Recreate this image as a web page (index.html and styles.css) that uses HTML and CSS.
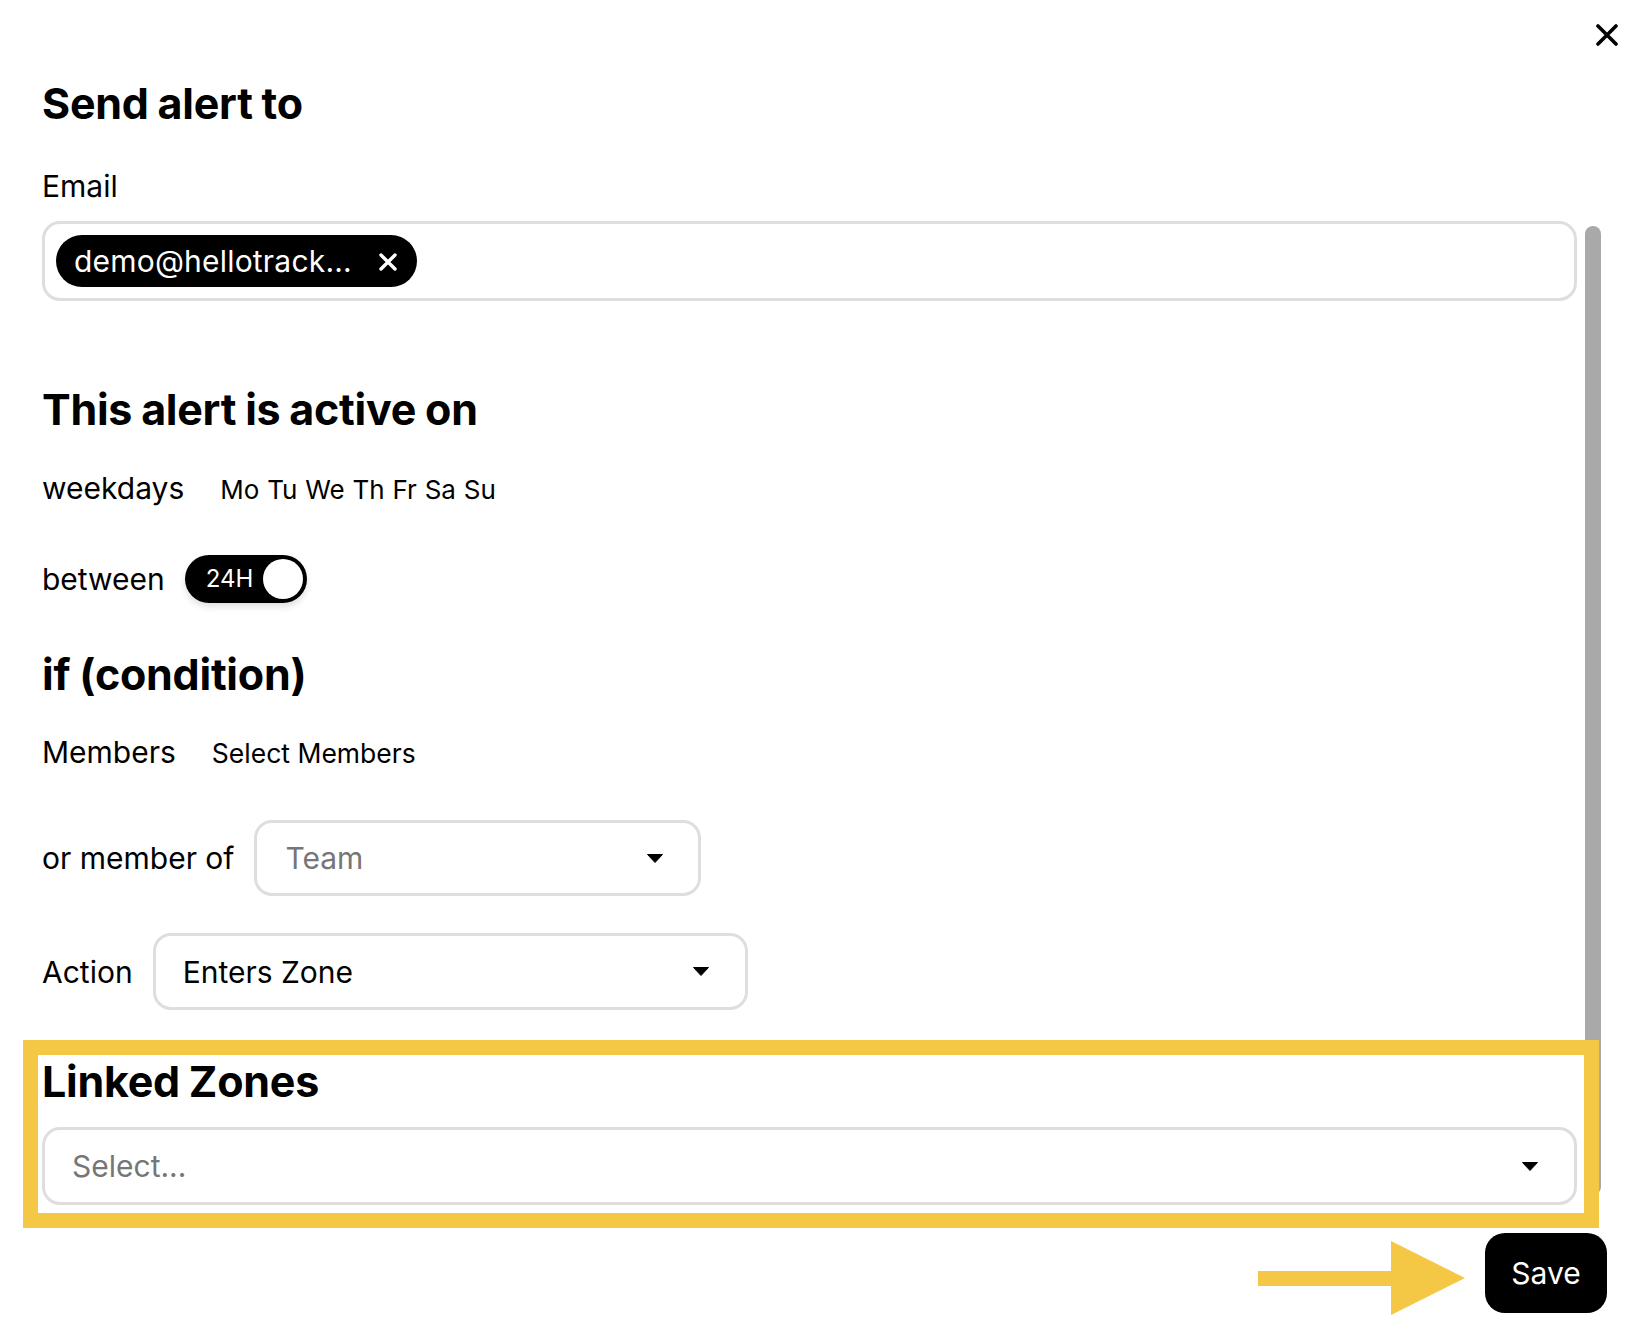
FILE: index.html
```html
<!DOCTYPE html>
<html lang="en">
<head>
<meta charset="utf-8">
<title>Send alert</title>
<link rel="stylesheet" href="styles.css">
</head>
<body>
<div class="modal">
  <div class="modal-top">
    <button class="close-btn" aria-label="Close">
      <svg width="22" height="22" viewBox="0 0 22 22"><path d="M2 2 L20 20 M20 2 L2 20" stroke="#000" stroke-width="3.6" stroke-linecap="round" fill="none"/></svg>
    </button>
  </div>

  <h2 class="section-title title-send">Send alert to</h2>
  <div class="field-label">Email</div>

  <div class="scroll-area">
    <div class="scroll-content">
      <div class="tag-input">
        <span class="chip">
          <span class="chip-text">demo@hellotrack...</span>
          <svg class="chip-x" width="18" height="18" viewBox="0 0 18 18"><path d="M2 2 L16 16 M16 2 L2 16" stroke="#fff" stroke-width="3.4" stroke-linecap="round" fill="none"/></svg>
        </span>
      </div>

      <h2 class="section-title title-active">This alert is active on</h2>

      <div class="row row-days">
        <span class="label">weekdays</span>
        <span class="days">Mo Tu We Th Fr Sa Su</span>
      </div>

      <div class="row row-between">
        <span class="label">between</span>
        <span class="toggle">
          <span class="toggle-text">24H</span>
          <span class="toggle-knob"></span>
        </span>
      </div>

      <h2 class="section-title title-if">if (condition)</h2>

      <div class="row row-members">
        <span class="label">Members</span>
        <span class="select-members">Select Members</span>
      </div>

      <div class="row row-team">
        <span class="label">or member of</span>
        <div class="select select-team">
          <span class="placeholder">Team</span>
          <svg class="caret" width="16" height="9" viewBox="0 0 16 9"><path d="M0.5 0.5 H15.5 L8 8.5 Z" fill="#000" stroke="#000" stroke-linejoin="round"/></svg>
        </div>
      </div>

      <div class="row row-action">
        <span class="label">Action</span>
        <div class="select select-action">
          <span class="value">Enters Zone</span>
          <svg class="caret" width="16" height="9" viewBox="0 0 16 9"><path d="M0.5 0.5 H15.5 L8 8.5 Z" fill="#000" stroke="#000" stroke-linejoin="round"/></svg>
        </div>
      </div>

      <section class="linked">
        <h2 class="section-title title-linked">Linked Zones</h2>
        <div class="select select-linked">
          <span class="placeholder">Select...</span>
          <svg class="caret" width="16" height="9" viewBox="0 0 16 9"><path d="M0.5 0.5 H15.5 L8 8.5 Z" fill="#000" stroke="#000" stroke-linejoin="round"/></svg>
        </div>
      </section>
    </div>
    <div class="scrollbar"></div>
  </div>

  <div class="footer">
    <svg class="hint-arrow" width="207" height="74" viewBox="0 0 207 74"><rect x="0" y="30" width="134" height="15" fill="#F4C745"/><polygon points="133,0 207,37 133,74" fill="#F4C745"/></svg>
    <button class="save-btn">Save</button>
  </div>
</div>
</body>
</html>
```

FILE: styles.css
```css
* {
  box-sizing: border-box;
}

html, body {
  margin: 0;
  padding: 0;
  background: #fff;
}

body {
  font-family: Inter, "Noto Sans", "Liberation Sans", sans-serif;
  color: #000;
}

.modal {
  width: 1642px;
  min-height: 1344px;
  padding-left: 42px;
}

.modal-top {
  display: flex;
  justify-content: flex-end;
  padding: 24px 24px 0 0;
  height: 46px;
}

.close-btn {
  border: 0;
  background: none;
  padding: 0;
  width: 22px;
  height: 22px;
  display: block;
}

.close-btn svg {
  display: block;
}

.section-title {
  margin: 0;
  font-size: 43px;
  line-height: 52px;
  font-weight: 700;
  letter-spacing: -0.25px;
  word-spacing: -1px;
}

.title-send {
  margin-top: 31px;
}

.field-label {
  margin-top: 39px;
  font-size: 30px;
  line-height: 36px;
}

.scroll-area {
  display: flex;
  gap: 8px;
  margin-top: 17px;
  padding-right: 41px;
}

.scroll-content {
  flex: 1;
  min-width: 0;
}

.scrollbar {
  width: 16px;
  flex: none;
  margin: 5px 0 18px;
  background: #a9a9a9;
  border-radius: 8px;
}

.tag-input {
  height: 80px;
  border: 3px solid #dedede;
  border-radius: 18px;
  padding: 11px;
  display: flex;
  align-items: center;
}

.chip {
  display: inline-flex;
  align-items: center;
  height: 52px;
  padding: 0 20px 0 18px;
  background: #000;
  color: #fff;
  border-radius: 26px;
  gap: 27px;
}

.chip-text {
  font-size: 30px;
  line-height: 36px;
  letter-spacing: 0.2px;
}

.chip-x {
  display: block;
  margin-top: 1px;
}

.title-active {
  margin-top: 82px;
}

.row {
  display: flex;
  gap: 20px;
}

.label {
  font-size: 30px;
  line-height: 36px;
  white-space: nowrap;
}

.row-days {
  margin-top: 35px;
  align-items: baseline;
}

.days {
  margin-left: 16px;
  font-size: 26px;
  line-height: 30px;
  word-spacing: 0.5px;
}

.row-between {
  margin-top: 49px;
  align-items: center;
}

.toggle {
  display: inline-flex;
  align-items: center;
  justify-content: space-between;
  width: 122px;
  height: 48px;
  border-radius: 24px;
  background: #000;
  padding: 0 4px 0 21px;
  box-shadow: 0 4px 6px rgba(0, 0, 0, 0.12);
}

.toggle-text {
  color: #fff;
  font-size: 24px;
  line-height: 30px;
}

.toggle-knob {
  width: 40px;
  height: 40px;
  border-radius: 50%;
  background: #fff;
}

.title-if {
  margin-top: 45px;
}

.row-members {
  margin-top: 34px;
  align-items: baseline;
}

.select-members {
  margin-left: 16px;
  font-size: 26.5px;
  line-height: 30px;
}

.row-team {
  margin-top: 50px;
  align-items: center;
}

.select {
  display: flex;
  align-items: center;
  justify-content: space-between;
  border: 3px solid #dedede;
  border-radius: 18px;
  padding: 0 36px 0 28px;
  font-size: 30px;
  line-height: 36px;
}

.select .caret {
  display: block;
  flex: none;
}

.placeholder {
  color: #767676;
}

.value {
  color: #000;
}

.select-team {
  width: 447px;
  height: 76px;
  padding-right: 35px;
}

.row-action {
  margin-top: 37px;
  align-items: center;
}

.select-action {
  width: 595px;
  height: 77px;
  padding-left: 27px;
}

.linked {
  position: relative;
  z-index: 1;
  margin: 45px -7px 0 -4px;
  padding: 0 7px 8px 4px;
  outline: 15px solid #F4C745;
  background: #fff;
}

.select-linked {
  margin-top: 20px;
  height: 78px;
  padding-left: 27px;
}

.footer {
  display: flex;
  justify-content: flex-end;
  align-items: center;
  gap: 20px;
  margin-top: 18px;
  padding-right: 35px;
}

.hint-arrow {
  display: block;
  margin-top: 10px;
}

.save-btn {
  width: 122px;
  height: 80px;
  border: 0;
  border-radius: 20px;
  background: #000;
  color: #fff;
  font-family: Inter, "Noto Sans", "Liberation Sans", sans-serif;
  font-size: 30px;
  padding: 0;
}
```
